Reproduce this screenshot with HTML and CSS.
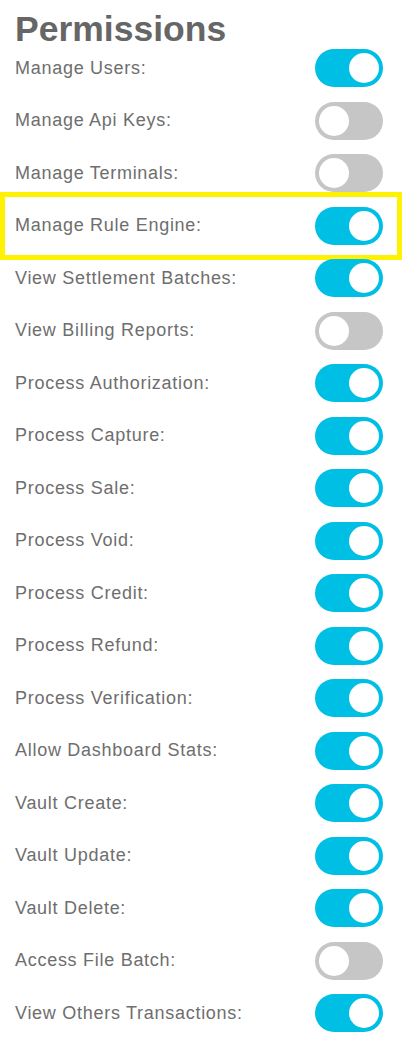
FILE: index.html
```html
<!DOCTYPE html>
<html>
<head>
<meta charset="utf-8">
<link rel="stylesheet" href="styles.css">
</head>
<body>
<div class="page">
  <h1 class="title">Permissions</h1>
  <ul class="perms">
    <li class="row"><span class="label">Manage Users:</span><span class="toggle on"><span class="knob"></span></span></li>
    <li class="row"><span class="label">Manage Api Keys:</span><span class="toggle"><span class="knob"></span></span></li>
    <li class="row"><span class="label">Manage Terminals:</span><span class="toggle"><span class="knob"></span></span></li>
    <li class="row highlight"><span class="label">Manage Rule Engine:</span><span class="toggle on"><span class="knob"></span></span></li>
    <li class="row"><span class="label">View Settlement Batches:</span><span class="toggle on"><span class="knob"></span></span></li>
    <li class="row"><span class="label">View Billing Reports:</span><span class="toggle"><span class="knob"></span></span></li>
    <li class="row"><span class="label">Process Authorization:</span><span class="toggle on"><span class="knob"></span></span></li>
    <li class="row"><span class="label">Process Capture:</span><span class="toggle on"><span class="knob"></span></span></li>
    <li class="row"><span class="label">Process Sale:</span><span class="toggle on"><span class="knob"></span></span></li>
    <li class="row"><span class="label">Process Void:</span><span class="toggle on"><span class="knob"></span></span></li>
    <li class="row"><span class="label">Process Credit:</span><span class="toggle on"><span class="knob"></span></span></li>
    <li class="row"><span class="label">Process Refund:</span><span class="toggle on"><span class="knob"></span></span></li>
    <li class="row"><span class="label">Process Verification:</span><span class="toggle on"><span class="knob"></span></span></li>
    <li class="row"><span class="label">Allow Dashboard Stats:</span><span class="toggle on"><span class="knob"></span></span></li>
    <li class="row"><span class="label">Vault Create:</span><span class="toggle on"><span class="knob"></span></span></li>
    <li class="row"><span class="label">Vault Update:</span><span class="toggle on"><span class="knob"></span></span></li>
    <li class="row"><span class="label">Vault Delete:</span><span class="toggle on"><span class="knob"></span></span></li>
    <li class="row"><span class="label">Access File Batch:</span><span class="toggle"><span class="knob"></span></span></li>
    <li class="row"><span class="label">View Others Transactions:</span><span class="toggle on"><span class="knob"></span></span></li>
  </ul>
</div>
</body>
</html>
```
FILE: styles.css
```css
html, body {
  margin: 0;
  padding: 0;
  background: #ffffff;
}
.page {
  width: 404px;
  padding: 16px 21px 0 15px;
  box-sizing: border-box;
  font-family: "Liberation Sans", Arial, sans-serif;
  color: #666666;
}
.title {
  margin: 0;
  font-size: 35.5px;
  line-height: 26px;
  font-weight: bold;
  color: #666666;
}
.perms {
  list-style: none;
  margin: 0;
  padding: 0;
}
.row {
  height: 52.5px;
  display: flex;
  align-items: center;
  justify-content: space-between;
  position: relative;
}
.label {
  font-size: 18px;
  letter-spacing: 0.72px;
  color: #6e6e6e;
}
.highlight::after {
  content: "";
  position: absolute;
  top: -7.5px;
  bottom: -8px;
  left: -15px;
  right: -19px;
  border: 5px solid #fff200;
  pointer-events: none;
}
.toggle {
  width: 68px;
  height: 38px;
  border-radius: 19px;
  background: #c6c6c6;
  display: flex;
  align-items: center;
  padding: 0 4px;
  box-sizing: border-box;
  justify-content: flex-start;
}
.toggle.on {
  background: #00bfe4;
  justify-content: flex-end;
}
.knob {
  width: 30px;
  height: 30px;
  border-radius: 50%;
  background: #ffffff;
}
```
